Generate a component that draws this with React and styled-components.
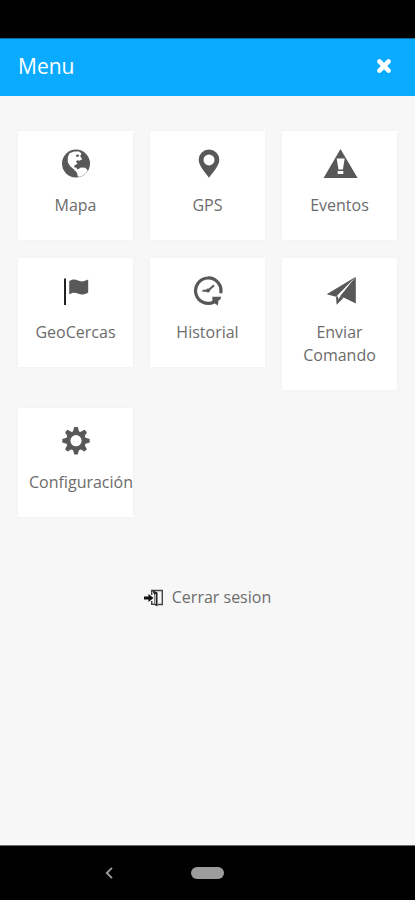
import React from "react";
import styled, { createGlobalStyle } from "styled-components";

const GlobalStyle = createGlobalStyle`
  *, *::before, *::after { box-sizing: border-box; }
  body {
    margin: 0;
    background: #f7f7f7;
    color: #6c6c6c;
    font-family: "Open Sans", "Noto Sans", sans-serif;
    font-size: 16px;
  }
  button { font: inherit; color: inherit; border: 0; padding: 0; background: none; cursor: pointer; }
`;

const Screen = styled.div`
  display: flex;
  flex-direction: column;
  min-height: 100vh;
`;

const StatusBar = styled.div`
  height: 38px;
  background: #000;
`;

const Header = styled.header`
  display: flex;
  align-items: center;
  justify-content: space-between;
  height: 58px;
  padding: 0 22px 3px 18px;
  background: #0aabff;
  border-top: 1px solid #0a6c9e;
  color: #fff;
`;

const Title = styled.h1`
  margin: 0;
  font-size: 21px;
  line-height: 28px;
  font-weight: 400;
`;

const CloseButton = styled.button`
  display: flex;
  width: 18px;
  height: 18px;
`;

const Main = styled.main`
  flex: 1;
  display: flex;
  flex-direction: column;
  align-items: center;
  gap: 69px;
  padding: 35px 18px 24px;
`;

const Grid = styled.nav`
  display: grid;
  grid-template-columns: repeat(3, minmax(0, 1fr));
  align-items: start;
  gap: 18px 17px;
  width: 100%;
`;

const Card = styled.a`
  display: flex;
  flex-direction: column;
  gap: 15px;
  padding: 18px 11px 23px;
  background: #fff;
  box-shadow: 0 0 3px rgba(0, 0, 0, 0.03);
  color: inherit;
  text-decoration: none;
`;

const CardIcon = styled.svg`
  width: 36px;
  height: 30px;
  align-self: center;
  color: #585858;
`;

const CardLabel = styled.span`
  line-height: 23px;
  text-align: center;
`;

const LogoutButton = styled.button`
  display: flex;
  align-items: center;
  gap: 8px;
  line-height: 23px;
`;

const NavBar = styled.footer`
  display: flex;
  align-items: center;
  justify-content: center;
  gap: 66px;
  height: 55px;
  background: #000;
  border-top: 1px solid #6c6c6c;
`;

const NavButton = styled.button`
  display: flex;
  align-items: center;
  justify-content: center;
  width: 33px;
  height: 24px;
`;

const HomePill = styled.span`
  width: 33px;
  height: 12px;
  border-radius: 6px;
  background: #9c9c9c;
`;

const NavSpacer = styled.span`
  width: 33px;
`;

const teeth = [0, 45, 90, 135, 180, 225, 270, 315];

const items = [
  {
    label: "Mapa",
    icon: (
      <>
        <circle cx="18" cy="14.6" r="14" fill="currentColor" />
        <path
          fill="#fff"
          d="M9.800 8.200 11.500 4.300 16 2.600 21.200 2.400 23.400 4.400 22.200 7.200 24.200 10.300 21.400 11.800 19.400 11.200 17.800 12.800 19.600 14.600 16.600 16.400 15.800 18.200 18 18.600 19.600 20.600 23 18.400 27.400 18.800 29.800 21.400 27.600 24.800 23.200 27.400 20 27.800 18.800 23.600 16 20.600 12 17 9.800 13.200Z"
        />
        <path fill="currentColor" d="m17.600 6 3-.6.6 1.800-2.400.8Z" />
      </>
    ),
  },
  {
    label: "GPS",
    icon: (
      <path
        fill="currentColor"
        fillRule="evenodd"
        d="M19 .4a10.300 10.300 0 0 1 10.300 10.400C29.300 16.600 23.800 22.200 19 28.700 14.200 22.200 8.700 16.600 8.700 10.800A10.300 10.300 0 0 1 19 .4Zm0 5a5.500 5.500 0 1 0 0 11 5.500 5.500 0 0 0 0-11Z"
      />
    ),
  },
  {
    label: "Eventos",
    icon: (
      <>
        <path fill="currentColor" d="M18.500 0 35.600 29H1.600Z" />
        <path fill="#fff" d="M14.700 9.500h8l-1.800 11h-4.400Zm1 12.500h5.600v3h-5.600Z" />
      </>
    ),
  },
  {
    label: "GeoCercas",
    icon: (
      <>
        <path fill="#222" d="M6 2.500h2V29H6Z" />
        <path
          fill="currentColor"
          d="M11.200 5.200C14 3 17 3.200 20 4.600c3 1.300 6.200 1.100 10.200-1v12.800c-3.500 2.200-6.700 2.800-9.700 1.400-3.200-1.500-6-1.600-9.300.5Z"
        />
      </>
    ),
  },
  {
    label: "Historial",
    icon: (
      <>
        <path
          fill="none"
          stroke="currentColor"
          strokeWidth="3.200"
          d="M30.700 17.200A12.700 12.700 0 1 0 24 26"
        />
        <path fill="currentColor" d="M22.300 20.800h8.900l-1 3-1.600.4-.8 5.200-5.400-3.600Z" />
        <path fill="none" stroke="currentColor" strokeWidth="2" d="M12.500 14.700H18l6-5.400" />
        <circle cx="18" cy="14.500" r="2" fill="currentColor" />
      </>
    ),
  },
  {
    label: "Enviar Comando",
    icon: (
      <>
        <path fill="currentColor" d="M33.800.8 14 20.800 4.700 18.300Z" />
        <path fill="currentColor" d="M33.800 1.500v26l-10.600-5.300-5.200-2Z" />
        <path fill="currentColor" d="m14 20.800 1.400-.8 1.200 3.400 2.200-2.800 2.800 1.200-7 7Z" />
        <path fill="none" stroke="currentColor" strokeWidth="1" d="M33.400 1.600 16.600 23.400" />
      </>
    ),
  },
  {
    label: "Configuración",
    icon: (
      <>
        {teeth.map((angle) => (
          <path
            key={angle}
            fill="currentColor"
            transform={`rotate(${angle} 18 14.700)`}
            d="M14.800 6 16.300 1h3.400L21.200 6Z"
          />
        ))}
        <circle cx="18" cy="14.700" r="7.700" fill="none" stroke="currentColor" strokeWidth="4.200" />
      </>
    ),
  },
];

export default function App() {
  return (
    <>
      <GlobalStyle />
      <Screen>
        <StatusBar />
        <Header>
          <Title>Menu</Title>
          <CloseButton type="button" aria-label="Cerrar">
            <svg viewBox="0 0 18 18" width="18" height="18" aria-hidden="true">
              <path d="m4.400 4.400 9.200 9.200m0-9.200-9.200 9.200" stroke="#fff" strokeWidth="4.600" strokeLinecap="round" />
            </svg>
          </CloseButton>
        </Header>
        <Main>
          <Grid aria-label="Menu">
            {items.map(({ label, icon }) => (
              <Card key={label} href="#">
                <CardIcon viewBox="0 0 36 30" aria-hidden="true">
                  {icon}
                </CardIcon>
                <CardLabel>{label}</CardLabel>
              </Card>
            ))}
          </Grid>
          <LogoutButton type="button">
            <svg viewBox="0 0 20 18" width="20" height="18" aria-hidden="true">
              <path d="M0 7.600h4.500V5L9.500 9l-5 4v-2.600H0Z" fill="#111" />
              <path d="M7.700 6V1.500h10.600v14h-4.600M7.700 12v3.200h3" fill="none" stroke="#444" strokeWidth="1.400" />
              <path d="m8 1 5.500 2.500v14L10.500 16V6Z" fill="#222" />
              <path d="M11.500 5v10" stroke="#bbb" strokeWidth="1" />
            </svg>
            <span>Cerrar sesion</span>
          </LogoutButton>
        </Main>
        <NavBar>
          <NavButton type="button" aria-label="Atrás">
            <svg viewBox="0 0 8 12" width="8" height="12" aria-hidden="true">
              <path d="M7 .8 1.800 6 7 11.200" fill="none" stroke="#a0a0a0" strokeWidth="1.800" />
            </svg>
          </NavButton>
          <NavButton type="button" aria-label="Inicio">
            <HomePill />
          </NavButton>
          <NavSpacer />
        </NavBar>
      </Screen>
    </>
  );
}
